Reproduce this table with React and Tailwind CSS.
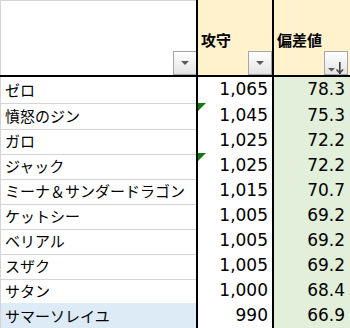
import React from "react";

// 表のデータ（名前・攻守・偏差値）
const rows = [
  { name: "ゼロ", power: "1,065", score: "78.3" },
  { name: "憤怒のジン", power: "1,045", score: "75.3", mark: true },
  { name: "ガロ", power: "1,025", score: "72.2" },
  { name: "ジャック", power: "1,025", score: "72.2", mark: true },
  { name: "ミーナ＆サンダードラゴン", power: "1,015", score: "70.7" },
  { name: "ケットシー", power: "1,005", score: "69.2" },
  { name: "ベリアル", power: "1,005", score: "69.2" },
  { name: "スザク", power: "1,005", score: "69.2" },
  { name: "サタン", power: "1,000", score: "68.4" },
  { name: "サマーソレイユ", power: "990", score: "66.9", selected: true },
];

const jp = { fontFamily: '"Noto Sans CJK JP", sans-serif' };
const num = { fontFamily: '"DejaVu Sans", "Noto Sans CJK JP", sans-serif' };

// フィルターボタン
function FilterButton({ sorted, className }) {
  return (
    <div
      className={
        "w-[24px] h-[24px] border border-[#a6a6a6] bg-gradient-to-b from-white to-[#e4e4e4] flex items-center justify-center " +
        className
      }
    >
      {sorted ? (
        <svg width="22" height="22" viewBox="0 0 22 22">
          <polygon points="3,16 10,16 6.5,19.5" fill="#5a5a5a" />
          <rect x="14" y="10" width="1.6" height="12" fill="#404040" />
          <polyline points="11.5,17.5 14.8,21 18,17.5" fill="none" stroke="#404040" strokeWidth="1.5" />
        </svg>
      ) : (
        <svg width="10" height="6" viewBox="0 0 10 6">
          <polygon points="1,1 9,1 5,5" fill="#5a5a5a" />
        </svg>
      )}
    </div>
  );
}

export default function App() {
  return (
    <div className="w-[350px] h-[328px] overflow-hidden bg-white text-black">
      {/* ヘッダー */}
      <div className="grid grid-cols-[196px_76px_78px] h-[77px] border-b-2 border-black">
        <div className="border-l border-t border-[#d4d4d4] flex flex-col justify-end items-end">
          <FilterButton className="mr-[-1px]" />
        </div>
        <div className="border-l-2 border-black bg-[#fff2cc] flex flex-col justify-end">
          <div className="pl-[3px] text-[15px] font-bold leading-[20px] mb-[1px]" style={jp}>
            攻守
          </div>
          <div className="flex justify-end">
            <FilterButton className="w-[23px]" />
          </div>
        </div>
        <div className="border-l-2 border-black bg-[#fff2cc] flex flex-col justify-end">
          <div className="pl-[3px] text-[15px] font-bold leading-[20px] mb-[1px]" style={jp}>
            偏差値
          </div>
          <div className="flex justify-end pr-[2px]">
            <FilterButton sorted />
          </div>
        </div>
      </div>

      {/* 本体 */}
      {rows.map((r, i) => (
        <div
          key={i}
          className={
            "grid grid-cols-[196px_76px_78px] " + (i === 0 ? "h-[26px]" : "h-[25px]")
          }
        >
          <div
            className={
              "border-l border-b border-[#d4d4d4] flex items-center pl-[4px] text-[15px] whitespace-nowrap overflow-visible relative z-10 " +
              (r.selected ? "bg-[#ddebf7]" : "")
            }
            style={jp}
          >
            {r.name}
          </div>
          <div className="relative border-l-2 border-l-black border-b border-b-[#d4d4d4] bg-white z-20 flex items-center justify-end pr-[4px] text-[17px]" style={num}>
            {r.mark && (
              <div className="absolute left-0 top-0 w-0 h-0 border-t-[8px] border-t-[#107c10] border-r-[8px] border-r-transparent" />
            )}
            {r.power}
          </div>
          <div className="border-l-2 border-l-black border-b border-b-[#d0dcc8] bg-[#e2efda] z-20 flex items-center justify-end pr-[5px] text-[17px]" style={num}>
            {r.score}
          </div>
        </div>
      ))}
    </div>
  );
}
